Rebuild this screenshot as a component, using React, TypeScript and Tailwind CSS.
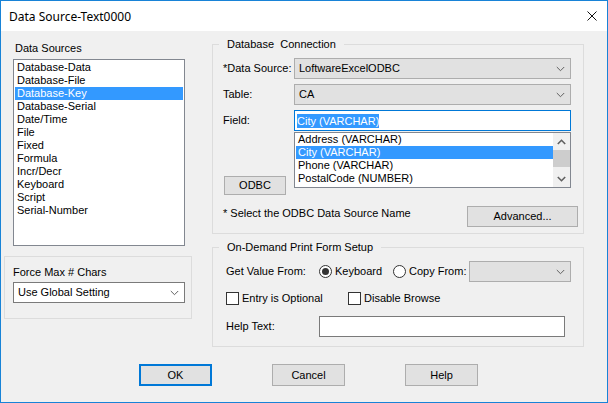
const SOURCES = [
  'Database-Data',
  'Database-File',
  'Database-Key',
  'Database-Serial',
  'Date/Time',
  'File',
  'Fixed',
  'Formula',
  'Incr/Decr',
  'Keyboard',
  'Script',
  'Serial-Number',
]

const FIELDS = ['Address (VARCHAR)', 'City (VARCHAR)', 'Phone (VARCHAR)', 'PostalCode (NUMBER)']

function Chevron({ up = false, thick = false }: { up?: boolean; thick?: boolean }) {
  return (
    <svg width="9" height="6" viewBox="0 0 9 6" className="shrink-0">
      <path
        d={up ? 'M0.8 5 L4.5 1.3 L8.2 5' : 'M0.8 1 L4.5 4.7 L8.2 1'}
        fill="none"
        stroke="#606060"
        strokeWidth={thick ? 1.6 : 1}
      />
    </svg>
  )
}

function Select({ value, width, white = false }: { value?: string; width: string; white?: boolean }) {
  return (
    <div
      className={`${width} h-[21px] flex items-center justify-between pl-[4px] pr-[5px] border ${
        white ? 'bg-white border-[#7a7a7a]' : 'bg-[#e1e1e1] border-[#adadad]'
      }`}
    >
      <span>{value}</span>
      <Chevron />
    </div>
  )
}

function Button({ label, className = '', focused = false }: { label: string; className?: string; focused?: boolean }) {
  return (
    <div
      className={`flex items-center justify-center bg-[#e1e1e1] ${
        focused ? 'border-2 border-[#0078d7]' : 'border border-[#adadad]'
      } ${className}`}
    >
      {label}
    </div>
  )
}

export default function App() {
  return (
    <div
      className="w-[608px] h-[403px] flex flex-col border border-[#1883d7] bg-[#f0f0f0] text-black text-[11px] leading-[13px] overflow-hidden"
      style={{ fontFamily: '"Liberation Sans", Arial, sans-serif' }}
    >
      {/* title bar */}
      <div className="h-[30px] shrink-0 bg-white flex items-center justify-between pl-[8px] pr-[10px]">
        <span className="text-[12px]" style={{ fontFamily: '"Noto Sans", sans-serif' }}>
          Data Source-Text0000
        </span>
        <svg width="10" height="10" viewBox="0 0 10 10">
          <path d="M0.5 0.5 L9.5 9.5 M9.5 0.5 L0.5 9.5" stroke="#111" strokeWidth="1" />
        </svg>
      </div>

      <div className="flex items-start">
        {/* left column */}
        <div className="ml-[3px] w-[188px] flex flex-col">
          <div className="mt-[11px] pl-[11px] h-[13px]">Data Sources</div>
          <div className="mt-[4px] ml-[9px] w-[172px] h-[187px] border border-[#828790] bg-white p-px">
            {SOURCES.map((s) => (
              <div
                key={s}
                className={`h-[13px] pl-[2px] ${s === 'Database-Key' ? 'bg-[#3399ff] text-white' : ''}`}
              >
                {s}
              </div>
            ))}
          </div>
          <div className="mt-[10px] w-[188px] h-[63px] border border-[#dcdcdc] pt-[9px] pl-[8px]">
            <div className="h-[13px]">Force Max # Chars</div>
            <div className="mt-[3px]">
              <Select value="Use Global Setting" width="w-[172px]" white />
            </div>
          </div>
        </div>

        {/* right column */}
        <div className="ml-[20px] w-[372px] flex flex-col">
          <fieldset className="mt-[7px] border border-[#dcdcdc]">
            <legend className="ml-[6px] px-[8px] whitespace-pre">Database  Connection</legend>
            <div className="pl-[10px] pr-[5px] pb-[6px]">
              <div className="mt-[7px] flex items-center h-[21px]">
                <div className="w-[71px]">*Data Source:</div>
                <Select value="LoftwareExcelODBC" width="w-[277px]" />
              </div>
              <div className="mt-[5px] flex items-center h-[21px]">
                <div className="w-[71px]">Table:</div>
                <Select value="CA" width="w-[277px]" />
              </div>
              <div className="mt-[5px] flex items-start">
                <div className="w-[71px] flex flex-col">
                  <div className="h-[21px] flex items-center">Field:</div>
                  <Button label="ODBC" className="mt-[45px] ml-px w-[62px] h-[19px]" />
                </div>
                <div className="w-[277px] flex flex-col">
                  <div className="h-[21px] border border-[#0078d7] bg-white flex items-center pl-[2px]">
                    <span className="bg-[#3399ff] text-white leading-[14px]">City (VARCHAR)</span>
                  </div>
                  <div className="mt-px h-[56px] border border-[#828790] bg-white flex">
                    <div className="flex-1 pl-px">
                      {FIELDS.map((f) => (
                        <div
                          key={f}
                          className={`h-[13px] pl-[2px] ${f === 'City (VARCHAR)' ? 'bg-[#3399ff] text-white' : ''}`}
                        >
                          {f}
                        </div>
                      ))}
                    </div>
                    <div className="w-[17px] bg-[#f0f0f0] flex flex-col">
                      <div className="h-[17px] flex items-center justify-center">
                        <Chevron up thick />
                      </div>
                      <div className="h-[17px] bg-[#cdcdcd]" />
                      <div className="flex-1" />
                      <div className="h-[17px] flex items-center justify-center">
                        <Chevron thick />
                      </div>
                    </div>
                  </div>
                </div>
              </div>
              <div className="mt-[11px] flex items-start justify-between h-[21px]">
                <div className="pt-px">* Select the ODBC Data Source Name</div>
                <Button label="Advanced..." className="w-[111px] h-[21px]" />
              </div>
            </div>
          </fieldset>

          <fieldset className="mt-[7px] border border-[#dcdcdc]">
            <legend className="ml-[6px] px-[8px]">On-Demand Print Form Setup</legend>
            <div className="pl-[13px] pb-[9px]">
              <div className="mt-[7px] flex items-center h-[21px]">
                <div className="w-[93px]">Get Value From:</div>
                <div className="w-[74px] flex items-center">
                  <div className="w-[13px] h-[13px] rounded-full border border-[#333] bg-white flex items-center justify-center">
                    <div className="w-[7px] h-[7px] rounded-full bg-[#333]" />
                  </div>
                  <span className="ml-[3px]">Keyboard</span>
                </div>
                <div className="w-[76px] flex items-center">
                  <div className="w-[13px] h-[13px] rounded-full border border-[#333] bg-white" />
                  <span className="ml-[3px]">Copy From:</span>
                </div>
                <Select width="w-[102px]" />
              </div>
              <div className="mt-[10px] flex items-center h-[13px]">
                <div className="w-[122px] flex items-center">
                  <div className="w-[13px] h-[13px] border border-[#333] bg-white" />
                  <span className="ml-[3px]">Entry is Optional</span>
                </div>
                <div className="flex items-center">
                  <div className="w-[13px] h-[13px] border border-[#333] bg-white" />
                  <span className="ml-[3px]">Disable Browse</span>
                </div>
              </div>
              <div className="mt-[11px] flex items-center h-[21px]">
                <div className="w-[93px]">Help Text:</div>
                <div className="w-[246px] h-[21px] border border-[#7a7a7a] bg-white" />
              </div>
            </div>
          </fieldset>
        </div>
      </div>

      {/* footer */}
      <div className="mt-[17px] pl-[138px] flex gap-[60px]">
        <Button label="OK" focused className="w-[73px] h-[22px]" />
        <Button label="Cancel" className="w-[73px] h-[22px]" />
        <Button label="Help" className="w-[73px] h-[22px]" />
      </div>
    </div>
  )
}
